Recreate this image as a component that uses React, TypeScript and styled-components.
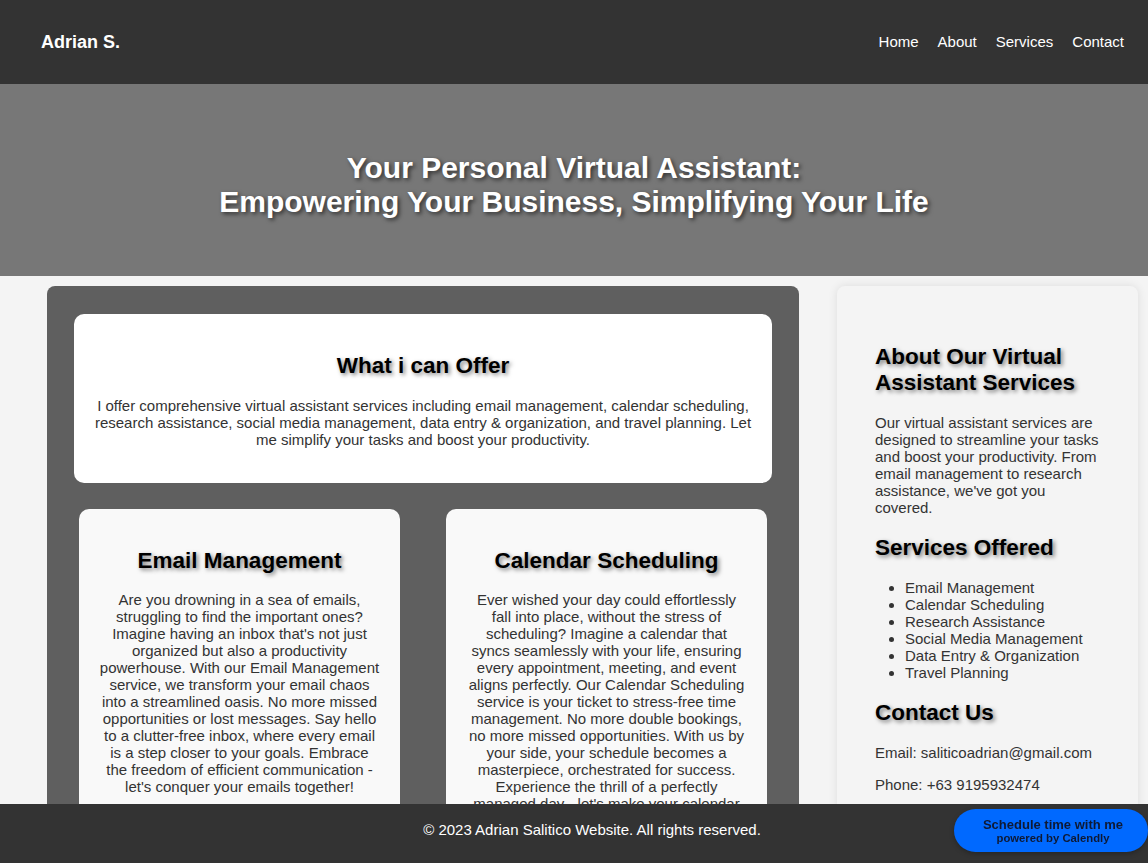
import styled, { createGlobalStyle } from "styled-components";

const GlobalStyle = createGlobalStyle`
  body {
    margin: 0;
    background: #f4f4f4;
    font-family: "Liberation Sans", Arial, sans-serif;
    font-size: 15px;
    color: #333;
  }
`;

const services = [
  {
    title: "Email Management",
    text: "Are you drowning in a sea of emails, struggling to find the important ones? Imagine having an inbox that's not just organized but also a productivity powerhouse. With our Email Management service, we transform your email chaos into a streamlined oasis. No more missed opportunities or lost messages. Say hello to a clutter-free inbox, where every email is a step closer to your goals. Embrace the freedom of efficient communication - let's conquer your emails together!",
  },
  {
    title: "Calendar Scheduling",
    text: "Ever wished your day could effortlessly fall into place, without the stress of scheduling? Imagine a calendar that syncs seamlessly with your life, ensuring every appointment, meeting, and event aligns perfectly. Our Calendar Scheduling service is your ticket to stress-free time management. No more double bookings, no more missed opportunities. With us by your side, your schedule becomes a masterpiece, orchestrated for success. Experience the thrill of a perfectly managed day - let's make your calendar work for you!",
  },
  {
    title: "Research Assistance",
    text: "Need answers but short on time? Let us dig through the noise for you. From market research to competitor analysis, we gather, organize and summarize the information that matters so you can make confident decisions faster.",
  },
  {
    title: "Social Media Management",
    text: "Keep your brand active and engaging without lifting a finger. We plan, schedule and publish content across your channels, respond to your community and keep your online presence consistent and professional.",
  },
  {
    title: "Data Entry & Organization",
    text: "Messy spreadsheets and scattered files slow you down. We turn your data into clean, accurate and well-organized records, so everything you need is exactly where you expect it to be.",
  },
  {
    title: "Travel Planning",
    text: "From flights to hotels to itineraries, we handle the details of every trip. Travel with peace of mind knowing every booking is confirmed and every plan is in place.",
  },
];

const offered = [
  "Email Management",
  "Calendar Scheduling",
  "Research Assistance",
  "Social Media Management",
  "Data Entry & Organization",
  "Travel Planning",
];

export default function App() {
  return (
    <>
      <GlobalStyle />
      <Header>
        <Logo>Adrian S.</Logo>
        <Nav>
          <a href="#home">Home</a>
          <a href="#about">About</a>
          <a href="#services">Services</a>
          <a href="#contact">Contact</a>
        </Nav>
      </Header>

      <Hero>
        <h1>
          Your Personal Virtual Assistant:
          <br />
          Empowering Your Business, Simplifying Your Life
        </h1>
      </Hero>

      <Layout>
        <MainPanel>
          <OfferCard>
            <h2>What i can Offer</h2>
            <p>
              I offer comprehensive virtual assistant services including email
              management, calendar scheduling, research assistance, social media
              management, data entry &amp; organization, and travel planning. Let
              me simplify your tasks and boost your productivity.
            </p>
          </OfferCard>
          <ServiceGrid>
            {services.map((s) => (
              <ServiceCard key={s.title}>
                <h2>{s.title}</h2>
                <p>{s.text}</p>
              </ServiceCard>
            ))}
          </ServiceGrid>
        </MainPanel>

        <Sidebar>
          <h2>About Our Virtual Assistant Services</h2>
          <p>
            Our virtual assistant services are designed to streamline your tasks
            and boost your productivity. From email management to research
            assistance, we've got you covered.
          </p>
          <h2>Services Offered</h2>
          <ul>
            {offered.map((item) => (
              <li key={item}>{item}</li>
            ))}
          </ul>
          <h2>Contact Us</h2>
          <p>Email: saliticoadrian@gmail.com</p>
          <p>Phone: +63 9195932474</p>
        </Sidebar>
      </Layout>

      <Footer>© 2023 Adrian Salitico Website. All rights reserved.</Footer>

      <Badge>
        Schedule time with me
        <span>powered by Calendly</span>
      </Badge>
    </>
  );
}

const Header = styled.header`
  height: 84px;
  background: #333;
  color: #fff;
  display: flex;
  align-items: center;
  justify-content: space-between;
  padding: 0 24px 0 41px;
`;

const Logo = styled.div`
  font-size: 18px;
  font-weight: bold;
`;

const Nav = styled.nav`
  display: flex;
  gap: 19px;
  margin-top: -2px;

  a {
    color: #fff;
    text-decoration: none;
    font-size: 15px;
  }
`;

const Hero = styled.section`
  background: #777;
  color: #fff;
  text-align: center;
  padding: 67px 20px 57px;

  h1 {
    margin: 0;
    font-size: 30px;
    text-shadow: 2px 2px 4px rgba(0, 0, 0, 0.6);
  }
`;

const Layout = styled.div`
  display: grid;
  grid-template-columns: 752px 301px;
  gap: 38px;
  align-items: start;
  padding: 10px 10px 80px 47px;
`;

const headingShadow = `
  h2 {
    font-size: 22.5px;
    color: #000;
    text-shadow: 2px 2px 4px rgba(0, 0, 0, 0.5);
  }
`;

const MainPanel = styled.main`
  background: #5f5f5f;
  border-radius: 8px;
  padding: 28px 27px 30px;
`;

const OfferCard = styled.div`
  background: #fff;
  border-radius: 10px;
  padding: 20px;
  text-align: center;
  ${headingShadow}

  p {
    margin-top: 17px;
  }
`;

const ServiceGrid = styled.div`
  display: grid;
  grid-template-columns: 1fr 1fr;
  column-gap: 46px;
  row-gap: 27px;
  padding: 0 5px;
  margin-top: 26px;
`;

const ServiceCard = styled.div`
  background: #f9f9f9;
  border-radius: 10px;
  padding: 20px;
  text-align: center;
  ${headingShadow}

  h2 {
    margin-bottom: 17px;
  }
`;

const Sidebar = styled.aside`
  background: #f4f4f4;
  border-radius: 8px;
  box-shadow: 0 0 10px rgba(0, 0, 0, 0.1);
  padding: 39px 38px;
  ${headingShadow}

  h2 {
    margin: 18.5px 0;
  }

  ul {
    margin: 15px 0;
    padding-left: 30px;
  }
`;

const Footer = styled.footer`
  position: fixed;
  left: 0;
  right: 0;
  bottom: 0;
  background: #333;
  color: #fff;
  text-align: center;
  padding: 17px 0 25px 36px;
`;

const Badge = styled.div`
  position: fixed;
  right: 0;
  bottom: 11px;
  box-sizing: border-box;
  width: 194px;
  height: 43px;
  border-radius: 22px;
  background: #0069ff;
  box-shadow: 0 2px 5px rgba(0, 0, 0, 0.25);
  color: #0e1a35;
  font-weight: bold;
  font-size: 13px;
  display: flex;
  flex-direction: column;
  align-items: center;
  justify-content: center;
  text-align: center;
  line-height: 15px;
  padding-left: 4px;

  span {
    font-size: 11.3px;
    line-height: 13px;
  }
`;
